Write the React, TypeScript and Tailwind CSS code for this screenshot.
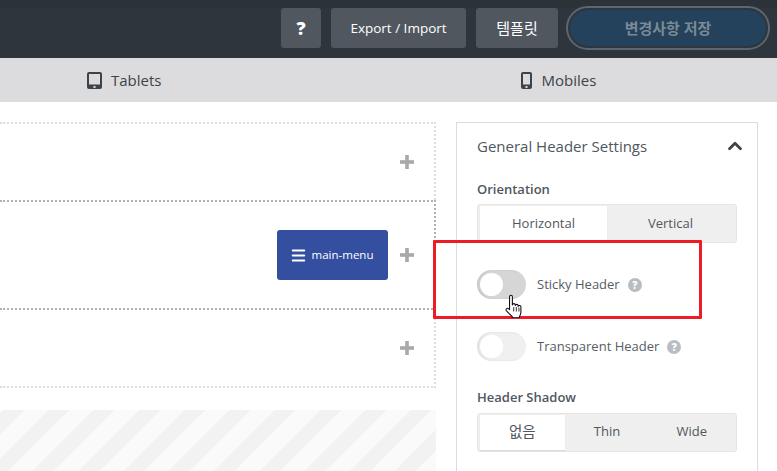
import { ChevronUp, Menu, Plus } from "lucide-react";

function Toggle({ dark }: { dark?: boolean }) {
  return (
    <div className={`h-[29px] w-[49px] rounded-full p-[3px] shadow-[inset_2px_0_3px_rgba(0,0,0,0.08)] ${dark ? "bg-[#d6d6d6]" : "bg-[#f0f0f0]"}`}>
      <div className="h-[23px] w-[23px] rounded-full bg-white" />
    </div>
  );
}

function Help() {
  return (
    <span className="-ml-[3px] flex h-[14px] w-[14px] items-center justify-center rounded-full bg-[#b9bdc2] text-[10px] font-extrabold leading-none text-white">?</span>
  );
}

function Segment({ items }: { items: string[] }) {
  return (
    <div className="mt-[5px] flex h-[39px] w-[260px] rounded-[3px] border border-[#e6e6e6] bg-[#efefef] px-[2px] py-[1px] text-[13px] text-[#50575e]">
      {items.map((item, i) => (
        <div key={item} className={`flex flex-1 items-center justify-center ${i === 0 ? "bg-white shadow-[0_1px_1px_rgba(0,0,0,0.08)]" : ""}`}>
          {item === "없음" ? <span className="text-[14.500px]">{item}</span> : item}
        </div>
      ))}
    </div>
  );
}

function AddIcon() {
  return <Plus size={24} strokeWidth={3.6} strokeLinecap="butt" className="ml-[7px] text-[#a8a8a8]" />;
}

function TabletIcon() {
  return (
    <svg width="15" height="17" viewBox="0 0 15 17" className="shrink-0">
      <rect x="0" y="0" width="15" height="17" rx="2" fill="#3c434a" />
      <rect x="2" y="2" width="11" height="10.500" fill="#dcdcde" />
      <rect x="6.500" y="14" width="2" height="2" fill="#dcdcde" />
    </svg>
  );
}

function PhoneIcon() {
  return (
    <svg width="11" height="17" viewBox="0 0 11 17" className="shrink-0">
      <rect x="0" y="0" width="11" height="17" rx="2" fill="#3c434a" />
      <rect x="2" y="2" width="7" height="10.500" fill="#dcdcde" />
      <rect x="4.500" y="14" width="2" height="2" fill="#dcdcde" />
    </svg>
  );
}

export default function App() {
  return (
    <div className="relative h-[471px] w-[777px] overflow-hidden bg-white font-['Open_Sans','Noto_Sans_CJK_KR',sans-serif]">
      <header className="flex h-[58px] items-center justify-end gap-[10px] bg-[linear-gradient(#2b3238_8px,#2e353c_8px)] pb-[2px] pr-[7px]">
        <div className="flex h-[40px] w-[40px] items-center justify-center rounded-[3px] bg-[#50575f] text-[18px] font-extrabold text-white">?</div>
        <div className="flex h-[40px] w-[135px] items-center justify-center rounded-[3px] bg-[#50575f] text-[13.500px] text-white">Export / Import</div>
        <div className="flex h-[40px] w-[82px] items-center justify-center rounded-[3px] bg-[#50575f] text-[15px] text-white">템플릿</div>
        <div className="-ml-[2px] h-[44px] w-[204px] rounded-full border-2 border-[#5b6670] p-[2px]">
          <div className="flex h-full items-center justify-center rounded-full bg-[#24425c] text-[15px] font-bold text-[#7b8a96]">변경사항 저장</div>
        </div>
      </header>
      <nav className="flex h-[44px] items-center bg-[#dcdcde] text-[15px] font-medium text-[#3c434a]">
        <div className="ml-[87px] flex items-center gap-[9px]">
          <TabletIcon />
          <span>Tablets</span>
        </div>
        <div className="ml-[360px] flex items-center gap-[9px]">
          <PhoneIcon />
          <span>Mobiles</span>
        </div>
      </nav>
      <div className="flex pt-[20px]">
        <div className="w-[436px] shrink-0">
          <div className="flex h-[78px] items-center justify-end border-t-2 border-r-2 border-dotted border-[#dddddd] pr-[15px]">
            <AddIcon />
          </div>
          <div className="flex h-[110px] items-center justify-end border-y-2 border-r-2 border-dotted border-[#b0b0b0] pr-[15px]">
            <div className="flex h-[50px] w-[111px] items-center justify-center gap-[5px] rounded-[3px] bg-[#344f9f] pr-[2px] text-[11.500px] font-medium text-white">
              <Menu size={17} strokeWidth={3} />
              <span>main-menu</span>
            </div>
            <AddIcon />
          </div>
          <div className="flex h-[78px] items-center justify-end border-r-2 border-b-2 border-dotted border-[#dddddd] pr-[15px]">
            <AddIcon />
          </div>
          <div className="mt-[22px] h-[70px] bg-[repeating-linear-gradient(135deg,#fafafa_0,#fafafa_2.300px,#f2f2f2_2.300px,#f2f2f2_17.150px,#fafafa_17.150px,#fafafa_32px)]" />
        </div>
        <aside className="ml-[20px] h-[360px] w-[302px] shrink-0 border border-[#dcdcde] px-[20px] pt-[12px] text-[#555d66]">
          <div className="flex items-center justify-between">
            <span className="text-[15px] text-[#50575e]">General Header Settings</span>
            <ChevronUp size={22} strokeWidth={3} className="-mr-[9px] text-[#3c434a]" />
          </div>
          <div className="mt-[22px] text-[13px] font-semibold text-[#50575e]">Orientation</div>
          <Segment items={["Horizontal", "Vertical"]} />
          <div className="mt-[27px] flex items-center gap-[11px] text-[13px]">
            <Toggle dark />
            <span>Sticky Header</span>
            <Help />
          </div>
          <div className="mt-[33px] flex items-center gap-[11px] text-[13px]">
            <Toggle />
            <span>Transparent Header</span>
            <Help />
          </div>
          <div className="mt-[27px] text-[13px] font-semibold text-[#50575e]">Header Shadow</div>
          <Segment items={["없음", "Thin", "Wide"]} />
        </aside>
      </div>
      <div className="pointer-events-none absolute left-[433px] top-[240px] h-[79px] w-[269px] rounded-[1px] border-[3px] border-[#ed1c24]" />
      <svg className="absolute left-[504px] top-[294px]" width="22" height="24" viewBox="0 0 20 22">
        <path d="M5 2.500c0-1.800 2.600-1.800 2.600 0v7.500c.2-1.600 2.600-1.600 2.700 0v.6c.2-1.400 2.500-1.400 2.600 0v.8c.3-1.200 2.500-1.100 2.500.4v4.600c0 2.200-.7 3.300-1.400 4.600v.8H7.500v-1L2.200 15.500c-1.200-1.700.8-3.200 2.200-1.800l.6.6z" fill="white" stroke="#111" strokeWidth="1" strokeLinejoin="round" />
        <path d="M8.800 12v4M11.200 12v4M13.600 12.500v3.500" stroke="#111" strokeWidth="0.800" fill="none" />
      </svg>
    </div>
  );
}
